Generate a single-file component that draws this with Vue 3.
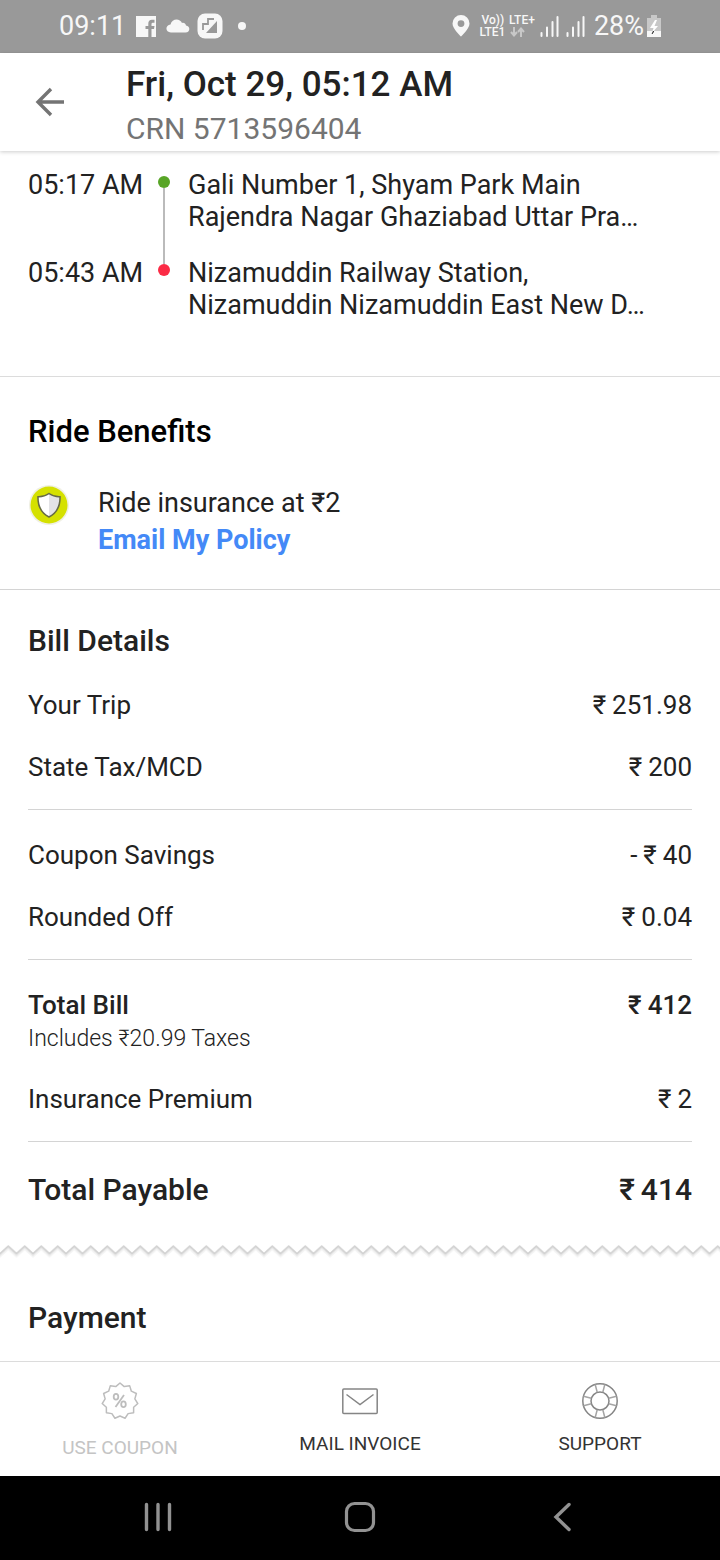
<script setup>
const stops = [
  { time: '05:17 AM', kind: 'pickup', lines: ['Gali Number 1, Shyam Park Main', 'Rajendra Nagar Ghaziabad Uttar Pra…'] },
  { time: '05:43 AM', kind: 'drop', lines: ['Nizamuddin Railway Station,', 'Nizamuddin Nizamuddin East New D…'] },
]

const billGroups = [
  [
    { label: 'Your Trip', sign: '', amount: '251.98' },
    { label: 'State Tax/MCD', sign: '', amount: '200' },
  ],
  [
    { label: 'Coupon Savings', sign: '-', amount: '40' },
    { label: 'Rounded Off', sign: '', amount: '0.04' },
  ],
  [
    { label: 'Total Bill', sign: '', amount: '412', strong: true, note: 'Includes ₹20.99 Taxes' },
    { label: 'Insurance Premium', sign: '', amount: '2' },
  ],
  [{ label: 'Total Payable', sign: '', amount: '414', grand: true }],
]

const badge = Array.from({ length: 22 }, (_, i) => {
  const angle = (i * Math.PI) / 11 - Math.PI / 2
  const r = i % 2 ? 15 : 18
  return `${(19 + r * Math.cos(angle)).toFixed(2)},${(19 + r * Math.sin(angle)).toFixed(2)}`
}).join(' ')

const spokes = [0, 90, 180, 270]
</script>

<template>
  <div class="screen">
    <div class="status">
      <span class="clock">09:11</span>
      <svg class="fb" width="20" height="21" viewBox="0 0 20 21" aria-hidden="true">
        <path fill="#f7f7f7" fill-rule="evenodd" d="M0 0h20v21h-4.500v-8h2.500l.5-3h-3V8q0-1.300 1.300-1.300h1.700V3.700h-2.500q-3.700 0-3.700 4V10H9.500v3h2.800v8H0z" />
      </svg>
      <svg class="cloud" width="24" height="14" viewBox="0 0 24 14" aria-hidden="true">
        <path fill="#f7f7f7" d="M5 13.500C-1 13.500-1 6 4.500 5.500 6-1 14-1 16 4c2-.5 3.500.5 4 2.500 4.500.5 4.500 7-.5 7z" />
      </svg>
      <svg class="note" width="26" height="26" viewBox="0 0 26 26" aria-hidden="true">
        <rect x=".5" y=".5" width="25" height="25" rx="7.500" fill="#f7f7f7" />
        <path d="M6 17v-6h5V6h6" fill="none" stroke="#999" stroke-width="1.800" />
        <path d="M20 8v12H9z" fill="#999" />
      </svg>
      <span class="more"></span>
      <span class="spacer"></span>
      <svg class="pin" width="18" height="22" viewBox="0 0 18 22" aria-hidden="true">
        <path fill="#f7f7f7" fill-rule="evenodd" d="M9 0a8.500 8.500 0 0 1 8.500 8.500C17.500 14 9 21.500 9 21.500S.5 14 .5 8.500A8.500 8.500 0 0 1 9 0zm0 5.200a3.400 3.400 0 1 0 0 6.800 3.400 3.400 0 0 0 0-6.800z" />
      </svg>
      <span class="network">
        <span class="net-top"><span>Vo))</span><span>LTE+</span></span>
        <span class="net-bottom"><span>LTE1</span>
          <svg width="15" height="10" viewBox="0 0 15 10" aria-hidden="true">
            <path d="M4 0v8M1 5l3 3.500L7 5M11 10V2M8 5l3-3.500L14 5" fill="none" stroke="#c8c8c8" stroke-width="2" />
          </svg>
        </span>
      </span>
      <svg v-for="n in 2" :key="n" class="signal" width="19" height="21" viewBox="0 0 19 21" aria-hidden="true">
        <path d="M1.500 17v3M7 11.500V20M12.500 6v14M17.500 1v19" fill="none" stroke="#f7f7f7" stroke-width="2" stroke-linecap="round" />
      </svg>
      <span class="percent">28%</span>
      <svg class="battery" width="14" height="22" viewBox="0 0 14 22" aria-hidden="true">
        <path d="M4 0h6v3h4v19H0V3h4z" fill="#c8c8c8" />
        <path d="M0 16h14v6H0z" fill="#f7f7f7" />
        <path d="M8 5 3 13h3.500L5 18l6-7H7.500L10 5z" fill="#fff" />
        <path d="M6.500 16.500 5 19M5.500 17l1.500-.5" stroke="#222" stroke-width="1" />
      </svg>
    </div>

    <header class="header">
      <button class="back" type="button" aria-label="Back">
        <svg width="30" height="30" viewBox="0 0 30 30" aria-hidden="true">
          <path d="M29 15H3M16 2 3 15l13 13" fill="none" stroke="#747474" stroke-width="3.400" />
        </svg>
      </button>
      <div class="heading">
        <h1>Fri, Oct 29, 05:12 AM</h1>
        <p class="crn">CRN 5713596404</p>
      </div>
    </header>

    <main class="content">
      <ol class="route">
        <li v-for="stop in stops" :key="stop.kind" :class="['stop', stop.kind]">
          <time>{{ stop.time }}</time>
          <span class="rail"><i class="lead"></i><i class="dot"></i><i class="tail"></i></span>
          <p class="place"><span v-for="line in stop.lines" :key="line">{{ line }}</span></p>
        </li>
      </ol>

      <section class="benefits">
        <h2>Ride Benefits</h2>
        <div class="benefit">
          <svg width="42" height="40" viewBox="0 1 42 40" aria-hidden="true">
            <circle cx="21" cy="21" r="20" fill="#f0f0e4" />
            <circle cx="21" cy="21" r="18.500" fill="#d5e100" />
            <path d="M21 9.500q5 3.500 11 3.200Q32.500 27 21 33 9.500 27 10 12.700q6 .3 11-3.200z" fill="#fff" />
            <path d="M21 9.500q5 3.500 11 3.200Q32.500 27 21 33z" fill="#e3e3e6" />
            <path d="M21 9.500q5 3.500 11 3.200Q32.500 27 21 33 9.500 27 10 12.700q6 .3 11-3.200z" fill="none" stroke="#666a45" stroke-width="1.500" />
          </svg>
          <div>
            <p>Ride insurance at ₹2</p>
            <a href="#policy">Email My Policy</a>
          </div>
        </div>
      </section>

      <section class="bill">
        <h2>Bill Details</h2>
        <dl v-for="(group, g) in billGroups" :key="g" class="group">
          <div v-for="row in group" :key="row.label" :class="['row', { strong: row.strong, grand: row.grand }]">
            <dt>{{ row.label }}<small v-if="row.note">{{ row.note }}</small></dt>
            <dd><span v-if="row.sign">{{ row.sign }}</span><span>₹</span><span>{{ row.amount }}</span></dd>
          </div>
        </dl>
      </section>

      <svg class="tear" width="100%" height="20" aria-hidden="true">
        <defs>
          <pattern id="teeth" width="16.500" height="20" patternUnits="userSpaceOnUse">
            <path d="M-2 15.800 0 14 8.250 6.500 16.500 14 18.500 15.800" fill="none" stroke="#f5f5f5" stroke-width="3" />
            <path d="M-2 14.600 0 12.800 8.250 5.300 16.500 12.800 18.500 14.600" fill="none" stroke="#e8e8e8" stroke-width="2" />
            <path d="M-2 13.400 0 11.600 8.250 4.100 16.500 11.600 18.500 13.400" fill="none" stroke="#d2d2d2" stroke-width="1.500" />
          </pattern>
        </defs>
        <rect width="100%" height="20" fill="url(#teeth)" />
      </svg>

      <section class="payment">
        <h2>Payment</h2>
      </section>
    </main>

    <footer class="actions">
      <button class="action" type="button" disabled>
        <svg width="38" height="38" viewBox="0 0 38 38" fill="none" stroke="#bdbdbd" aria-hidden="true">
          <polygon :points="badge" stroke-width="1.500" stroke-linejoin="round" />
          <g stroke-width="1.800">
            <ellipse cx="15" cy="14.800" rx="2.300" ry="2.900" />
            <ellipse cx="22.500" cy="22.200" rx="2.300" ry="2.900" />
            <path d="m23 13-8.500 12" />
          </g>
        </svg>
        <span>USE COUPON</span>
      </button>
      <button class="action" type="button">
        <svg width="38" height="38" viewBox="0 0 38 38" fill="none" stroke="#858585" stroke-width="1.500" aria-hidden="true">
          <rect x="1.800" y="7" width="34.400" height="24.500" rx="1" />
          <path d="m5.500 12.500 13.500 10 13.500-10" />
        </svg>
        <span>MAIL INVOICE</span>
      </button>
      <button class="action" type="button">
        <svg width="38" height="38" viewBox="0 0 38 38" fill="none" stroke="#858585" stroke-width="1.500" aria-hidden="true">
          <circle cx="19" cy="19" r="17.200" />
          <circle cx="19" cy="19" r="9" />
          <path v-for="a in spokes" :key="a" d="m14.200 2.500 2 7.800M23.800 2.500l-2 7.800" stroke="#a5a5a5" :transform="`rotate(${a} 19 19)`" />
        </svg>
        <span>SUPPORT</span>
      </button>
    </footer>

    <nav class="system" aria-label="System navigation">
      <button type="button" aria-label="Recent apps">
        <svg width="32" height="32" viewBox="0 0 32 32" aria-hidden="true">
          <path d="M4.500 3.500v25M16 3.500v25M27.500 3.500v25" stroke="#929292" stroke-width="3.400" stroke-linecap="round" />
        </svg>
      </button>
      <button type="button" aria-label="Home">
        <svg width="32" height="32" viewBox="0 0 32 32" aria-hidden="true">
          <rect x="2.500" y="2.500" width="27" height="27" rx="8" fill="none" stroke="#929292" stroke-width="3.200" />
        </svg>
      </button>
      <button type="button" aria-label="Go back">
        <svg width="32" height="32" viewBox="0 0 32 32" aria-hidden="true">
          <path d="M23 3.500 10 16l13 12.500" fill="none" stroke="#929292" stroke-width="3.400" stroke-linecap="round" />
        </svg>
      </button>
    </nav>
  </div>
</template>

<style>
body {
  margin: 0;
  background: #fff;
}
</style>

<style scoped>
.screen {
  display: flex;
  flex-direction: column;
  min-height: 100vh;
  background: #fff;
  color: #222;
  font-family: Roboto, "Noto Sans", sans-serif;
  font-size: 27px;
  line-height: 32px;
}

h1, h2, p, ol, dl, dt, dd {
  margin: 0;
  padding: 0;
  font-weight: 400;
}

button {
  border: 0;
  padding: 0;
  background: none;
  color: inherit;
  font: inherit;
}

svg {
  display: block;
  flex: none;
}

.status {
  display: flex;
  align-items: center;
  box-sizing: border-box;
  height: 53px;
  padding: 0 59px 1px;
  background: #999;
  color: #f7f7f7;
}

.fb { margin-left: 10px; }
.cloud { margin-left: 10px; }
.note { margin-left: 7px; }

.more {
  width: 8px;
  height: 8px;
  margin-left: 15px;
  border-radius: 50%;
  background: #f7f7f7;
}

.spacer { flex: 1; }

.network {
  display: flex;
  flex-direction: column;
  margin: 0 5px 0 9px;
  font-size: 12px;
  font-weight: 500;
  line-height: 12px;
}

.net-top, .net-bottom {
  display: flex;
  align-items: center;
  gap: 5px;
}

.net-top { padding-left: 2px; }
.signal { margin-right: 7px; }
.percent { margin-left: 2px; }
.battery { margin-left: 3px; }

.header {
  display: flex;
  align-items: center;
  box-sizing: border-box;
  height: 98px;
  box-shadow: 0 1px 4px rgba(0, 0, 0, 0.2);
}

.back {
  width: 126px;
  padding-left: 35px;
}

.heading { padding-top: 10px; }

h1 {
  font-size: 35px;
  font-weight: 500;
  line-height: 44px;
}

.crn {
  color: #747474;
  font-size: 30px;
  line-height: 44px;
}

.content {
  flex: 1;
}

.route {
  padding: 18px 28px 55px;
  border-bottom: 1px solid #dcdcdc;
  list-style: none;
}

.stop {
  display: grid;
  grid-template-columns: 124px 24px 1fr;
}

.rail {
  display: flex;
  flex-direction: column;
  align-items: center;
}

.lead {
  width: 2px;
  height: 7px;
}

.dot {
  width: 12px;
  height: 12px;
  border-radius: 50%;
}

.tail {
  flex: 1;
  width: 2px;
}

.pickup .dot { background: #58a527; }
.drop .dot { background: #fb2b45; }
.pickup .tail, .drop .lead { background: #bbb; }
.pickup .place { padding-bottom: 24px; }
.place { padding-left: 12px; }
.place span { display: block; }

h2 {
  font-size: 30px;
  font-weight: 500;
  line-height: 36px;
}

.benefits {
  padding: 37px 28px 30px;
  border-bottom: 1px solid #d4d4d4;
}

.benefits h2 {
  color: #000;
  font-size: 31px;
}

.benefit {
  display: flex;
  align-items: flex-start;
  gap: 28px;
  margin-top: 35px;
  line-height: 37px;
}

.benefit a {
  color: #4489f7;
  font-weight: 700;
  text-decoration: none;
}

.bill {
  padding: 33px 28px;
  font-size: 26px;
}

.bill h2 { margin-bottom: 30px; }

.group {
  display: flex;
  flex-direction: column;
  gap: 30px;
}

.group + .group {
  margin-top: 26px;
  padding-top: 29px;
  border-top: 1px solid #d4d4d4;
}

.row {
  display: flex;
  justify-content: space-between;
}

.row dd {
  display: flex;
  gap: 6px;
}

.row small {
  display: block;
  margin-top: 4px;
  font-size: 23px;
  font-weight: 300;
  line-height: 28px;
}

.strong dt, .strong dd { font-weight: 500; }

.grand dt, .grand dd {
  font-size: 30px;
  font-weight: 500;
  line-height: 38px;
}

.payment { padding: 38px 28px 25px; }

.actions {
  display: flex;
  border-top: 1px solid #dcdcdc;
}

.action {
  display: flex;
  flex: 1;
  flex-direction: column;
  align-items: center;
  gap: 12px;
  padding: 20px 0 16px;
  color: #333;
  font-size: 19px;
  line-height: 24px;
}

.action:disabled {
  gap: 16px;
  color: #c4c4c4;
}

.system {
  display: flex;
  padding: 25px 8% 27px;
  background: #000;
}

.system button {
  display: flex;
  flex: 1;
  justify-content: center;
}
</style>
